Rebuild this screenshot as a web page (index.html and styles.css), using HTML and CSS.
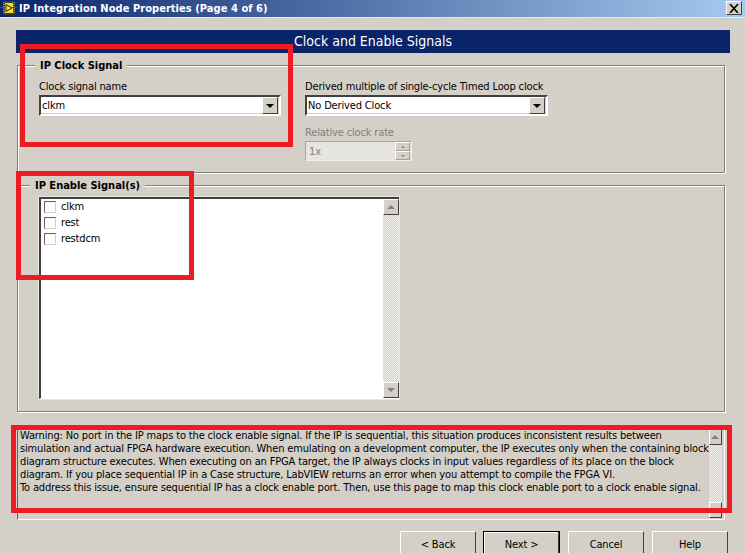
FILE: index.html
```html
<!DOCTYPE html>
<html lang="en">
<head>
<meta charset="utf-8">
<title>IP Integration Node Properties</title>
<link rel="stylesheet" href="styles.css">
</head>
<body>
<div class="dialog">
  <header class="titlebar">
    <svg class="app-icon" width="17" height="14" viewBox="0 0 17 14">
      <rect x="3" y="0" width="12" height="14" fill="#3a3a2a"/>
      <path d="M4 1v12M14 1v12" stroke="#b8b8a8" stroke-width="1" stroke-dasharray="1 1"/>
      <rect x="5" y="2" width="8" height="10" fill="#f5e020"/>
      <path d="M6 3.500l6 3.500-6 3.500z" fill="#f5e020" stroke="#222" stroke-width="1"/>
      <path d="M0 6.500h5M12 6.500h5" stroke="#d01818" stroke-width="1"/>
    </svg>
    <span class="title-text">IP Integration Node Properties (Page 4 of 6)</span>
    <span class="close">
      <svg width="10" height="9" viewBox="0 0 10 9"><path d="M1 0l8 9M9 0l-8 9" stroke="#000" stroke-width="1.600" fill="none"/></svg>
    </span>
  </header>
  <main class="content">
    <h1 class="page-head">Clock and Enable Signals</h1>
    <section class="group group-clock">
      <h2 class="legend">IP Clock Signal</h2>
      <div class="clock-col-a">
        <label class="lbl">Clock signal name</label>
        <div class="combo combo-a"><span class="combo-val">clkm</span><span class="combo-btn"><i class="down"></i></span></div>
      </div>
      <div class="clock-col-b">
        <label class="lbl">Derived multiple of single-cycle Timed Loop clock</label>
        <div class="combo combo-b"><span class="combo-val">No Derived Clock</span><span class="combo-btn"><i class="down"></i></span></div>
        <label class="lbl lbl-off">Relative clock rate</label>
        <div class="spin"><span class="spin-val">1x</span><span class="spin-btns"><span class="spin-b"><i class="up-off"></i></span><span class="spin-b"><i class="down-off"></i></span></span></div>
      </div>
    </section>
    <section class="group group-enable">
      <h2 class="legend legend-b">IP Enable Signal(s)</h2>
      <div class="listbox">
        <ul class="items">
          <li class="item"><span class="check"></span>clkm</li>
          <li class="item"><span class="check"></span>rest</li>
          <li class="item"><span class="check"></span>restdcm</li>
        </ul>
        <div class="sbar">
          <span class="sbtn"><i class="up"></i></span>
          <span class="strack"></span>
          <span class="sbtn"><i class="dn"></i></span>
        </div>
      </div>
    </section>
    <section class="warning">
      <p class="warn-text">Warning: No port in the IP maps to the clock enable signal. If the IP is sequential, this situation produces inconsistent results between<br>simulation and actual FPGA hardware execution. When emulating on a development computer, the IP executes only when the containing block<br>diagram structure executes. When executing on an FPGA target, the IP always clocks in input values regardless of its place on the block<br>diagram. If you place sequential IP in a Case structure, LabVIEW returns an error when you attempt to compile the FPGA VI.<br>To address this issue, ensure sequential IP has a clock enable port. Then, use this page to map this clock enable port to a clock enable signal.</p>
      <div class="sbar sbar-w">
        <span class="sbtn"><i class="up"></i></span>
        <span class="strack"></span>
        <span class="sbtn"><i class="dn"></i></span>
      </div>
    </section>
    <footer class="buttons">
      <button class="btn">&lt; Back</button>
      <button class="btn btn-default">Next &gt;</button>
      <button class="btn">Cancel</button>
      <button class="btn">Help</button>
    </footer>
  </main>
  <div class="mark mark-1"></div>
  <div class="mark mark-2"></div>
  <div class="mark mark-3"></div>
</div>
</body>
</html>
```
FILE: styles.css
```css
* { box-sizing: border-box; }
html, body { margin: 0; padding: 0; height: 100%; overflow: hidden; }
body { background: #d4d0c8; color: #000; font-family: "DejaVu Sans", sans-serif; font-stretch: condensed; font-size: 11px; line-height: 13px; letter-spacing: -0.15px; }
.dialog { position: relative; width: 745px; height: 553px; overflow: hidden; }
.titlebar { height: 18px; display: flex; align-items: center; padding: 0 3px 1px 0; border-bottom: 1px solid #ece9e1; background: linear-gradient(90deg, #0a246a, #a6caf0); }
.app-icon { flex: none; margin-right: 2px; }
.title-text { flex: 1; color: #fff; font-weight: bold; font-size: 11px; letter-spacing: 0.05px; }
.close { width: 16px; height: 14px; display: flex; align-items: center; justify-content: center; background: #d4d0c8; border: 1px solid; border-color: #fff #404040 #404040 #fff; }
.content { display: flex; flex-direction: column; padding: 12px 0 0 17px; }
.page-head { margin: 0 15px 0 -1px; width: 714px; height: 23px; background: #0a246a; color: #fff; font-size: 14px; font-weight: normal; line-height: 23px; text-align: center; letter-spacing: 0; }
.group { position: relative; width: 708px; border: 1px solid #808080; box-shadow: inset 1px 1px 0 #fff, 1px 1px 0 #fff; }
.group-clock { height: 108px; margin-top: 12px; padding: 14px 0 0 21px; display: flex; gap: 24px; }
.group-enable { height: 227px; margin-top: 12px; padding: 11px 0 0 21px; }
.legend { position: absolute; top: -7px; left: 17px; margin: 0; padding: 0 5px; background: #d4d0c8; font-size: 11px; font-weight: bold; line-height: 13px; letter-spacing: 0; }
.legend-b { left: 12px; }
.lbl { display: block; height: 14px; line-height: 14px; }
.lbl-off { margin-top: 10px; color: #808080; }
.combo { display: flex; height: 21px; margin-top: 1px; background: #fff; border: 2px solid; border-color: #404040 #fff #fff #404040; box-shadow: inset -1px -1px 0 #d4d0c8; padding-right: 1px; }
.combo-a { width: 242px; }
.combo-b { width: 243px; }
.combo-val { flex: 1; line-height: 18px; padding: 0 1px; }
.combo-btn { width: 16px; height: 17px; display: flex; align-items: center; justify-content: center; background: #d4d0c8; border: 1px solid; border-color: #fff #404040 #404040 #fff; }
.down { width: 0; height: 0; border: 4px solid transparent; border-top-color: #000; border-bottom: 0; }
.spin { display: flex; width: 107px; height: 20px; margin-top: 1px; background: #e6e4de; border: 1px solid; border-color: #a8a8a0 #f0eeea #f0eeea #a8a8a0; padding-right: 1px; color: #808080; }
.spin-val { flex: 1; line-height: 20px; padding-left: 3px; }
.spin-btns { display: flex; flex-direction: column; width: 15px; }
.spin-b { flex: 1; display: flex; align-items: center; justify-content: center; background: #d4d0c8; border: 1px solid; border-color: #fff #a0a0a0 #a0a0a0 #fff; }
.up-off { width: 0; height: 0; border: 2px solid transparent; border-bottom-color: #808080; border-top: 0; }
.down-off { width: 0; height: 0; border: 2px solid transparent; border-top-color: #808080; border-bottom: 0; }
.listbox { display: flex; width: 360px; height: 202px; background: #fff; border-style: solid; border-width: 2px 0 1px 2px; border-color: #404040 #d4d0c8 #fff #404040; outline: 1px solid #e8e6e0; outline-offset: 0; }
.items { flex: 1; list-style: none; margin: -1px 0 0; padding: 0 0 0 3px; }
.item { display: flex; align-items: center; height: 16px; gap: 5px; }
.check { width: 12px; height: 12px; margin-top: 2px; background: #fff; border: 1px solid; border-color: #606060 #d4d0c8 #d4d0c8 #606060; }
.sbar { display: flex; flex-direction: column; width: 16px; }
.sbtn { height: 16px; flex: none; display: flex; align-items: center; justify-content: center; background: #d4d0c8; border: 1px solid; border-color: #fff #404040 #404040 #fff; }
.strack { flex: 1; background-color: #e8e6e2; background-image: repeating-conic-gradient(#d4d0c8 0 25%, #f2f0ec 0 50%); background-size: 2px 2px; }
.up { width: 0; height: 0; border: 4px solid transparent; border-bottom-color: #808080; border-top: 0; }
.dn { width: 0; height: 0; border: 4px solid transparent; border-top-color: #808080; border-bottom: 0; }
.warning { display: flex; width: 708px; height: 91px; margin-top: 17px; padding: 0 2px; border-left: 1px solid #606060; border-bottom: 1px solid #fff; border-right: 1px solid #fff; }
.warn-text { flex: 1; margin: 0; line-height: 13px; white-space: nowrap; }
.sbar-w { width: 16px; margin-bottom: 1px; }
.buttons { display: flex; gap: 8px; margin: 11px 0 0 383px; }
.btn { width: 76px; height: 26px; padding: 0; background: #d4d0c8; color: #000; font: inherit; letter-spacing: inherit; border: 1px solid; border-color: #fff #404040 #404040 #fff; }
.btn-default { width: 77px; margin-left: -1px; border: 1px solid #000; box-shadow: inset -1px -1px 0 #404040, inset 1px 1px 0 #fff; }
.mark { position: absolute; border: 5px solid #ed1c24; }
.mark-1 { left: 20px; top: 44px; width: 273px; height: 103px; }
.mark-2 { left: 16px; top: 171px; width: 178px; height: 109px; }
.mark-3 { left: 11px; top: 425px; width: 721px; height: 88px; }
```
